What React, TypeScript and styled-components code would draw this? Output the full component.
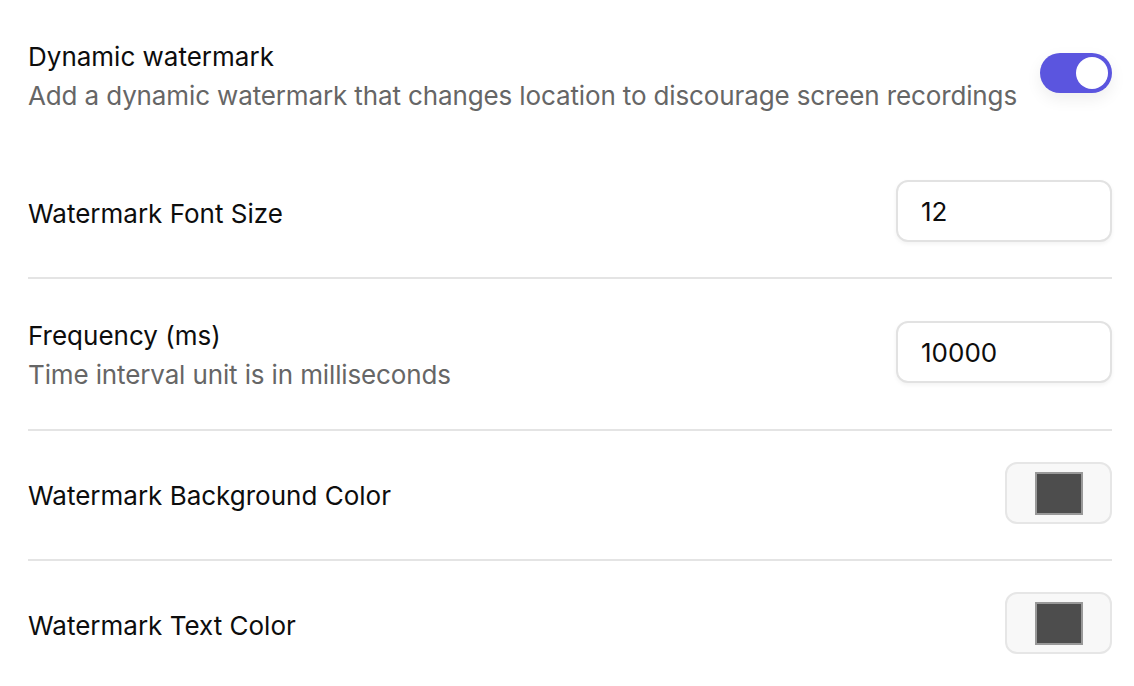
import React from "react";
import styled, { createGlobalStyle } from "styled-components";

const GlobalStyle = createGlobalStyle`
	* {
		box-sizing: border-box;
	}
	body {
		margin: 0;
		background: #fff;
		font-family: Inter, "Noto Sans", sans-serif;
		-webkit-font-smoothing: antialiased;
	}
`;

type NumberField = {
	label: string;
	hint?: string;
	value: string;
};

const numberFields: NumberField[] = [
	{ label: "Watermark Font Size", value: "12" },
	{ label: "Frequency (ms)", hint: "Time interval unit is in milliseconds", value: "10000" },
];

const colorFields = [
	{ label: "Watermark Background Color", color: "#4d4d4d" },
	{ label: "Watermark Text Color", color: "#4d4d4d" },
];

function App() {
	return (
		<>
			<GlobalStyle />
			<Page>
				<TopRow>
					<TextBlock>
						<Label>Dynamic watermark</Label>
						<Hint>Add a dynamic watermark that changes location to discourage screen recordings</Hint>
					</TextBlock>
					<Toggle $on>
						<Knob />
					</Toggle>
				</TopRow>
				{numberFields.map((f) => (
					<Row key={f.label} $divider>
						<TextBlock>
							<Label>{f.label}</Label>
							{f.hint && <Hint>{f.hint}</Hint>}
						</TextBlock>
						<Input defaultValue={f.value} />
					</Row>
				))}
				{colorFields.map((f, i) => (
					<Row key={f.label} $divider={i < colorFields.length - 1}>
						<TextBlock>
							<Label>{f.label}</Label>
						</TextBlock>
						<SwatchButton>
							<Swatch $color={f.color} />
						</SwatchButton>
					</Row>
				))}
			</Page>
		</>
	);
}

export default App;

const Page = styled.div`
	width: 1134px;
	padding: 31px 22px 0 28px;
`;

const Row = styled.div<{ $divider?: boolean }>`
	display: flex;
	justify-content: space-between;
	align-items: center;
	padding: 31px 0 35px;
	border-bottom: 2px solid ${(p) => (p.$divider ? "#e4e4e4" : "transparent")};
`;

const TopRow = styled(Row)`
	padding: 0 0 34px;
	border-bottom: none;
`;

const TextBlock = styled.div`
	display: flex;
	flex-direction: column;
`;

const Label = styled.div`
	font-size: 26px;
	line-height: 40px;
	padding-top: 6px;
	color: #0d0d0d;
`;

const Hint = styled.div`
	font-size: 26px;
	line-height: 38px;
	letter-spacing: -0.13px;
	color: #666;
`;

const Toggle = styled.div<{ $on?: boolean }>`
	width: 72px;
	height: 40px;
	border-radius: 20px;
	padding: 4px;
	display: flex;
	justify-content: ${(p) => (p.$on ? "flex-end" : "flex-start")};
	background: ${(p) => (p.$on ? "#5b55df" : "#ddd")};
	box-shadow: 0 6px 16px rgba(0, 0, 0, 0.07);
	margin-top: -1px;
`;

const Knob = styled.div`
	width: 32px;
	height: 32px;
	border-radius: 50%;
	background: #fff;
`;

const Input = styled.input`
	width: 216px;
	height: 62px;
	border: 2px solid #e2e2e2;
	border-radius: 12px;
	padding: 0 0 0 23px;
	font-family: Inter, "Noto Sans", sans-serif;
	font-size: 26px;
	color: #0d0d0d;
	background: #fff;
	box-shadow: 0 2px 4px rgba(0, 0, 0, 0.05);
	outline: none;
`;

const SwatchButton = styled.div`
	width: 107px;
	height: 62px;
	border: 2px solid #e6e6e6;
	border-radius: 12px;
	background: #f8f8f8;
	display: flex;
	align-items: center;
	justify-content: center;
`;

const Swatch = styled.div<{ $color: string }>`
	width: 48px;
	height: 43px;
	border: 2px solid #999;
	background: ${(p) => p.$color};
`;
